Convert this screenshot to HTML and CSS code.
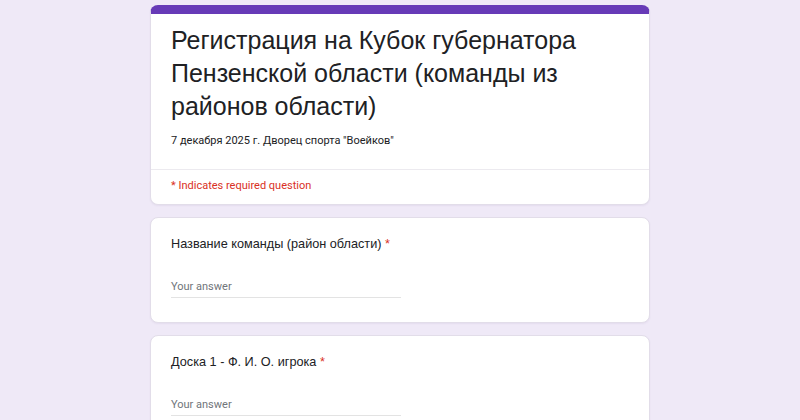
FILE: index.html
```html
<!DOCTYPE html>
<html lang="ru">
<head>
<meta charset="utf-8">
<link rel="stylesheet" href="styles.css">
</head>
<body>
<div class="form">
  <div class="card header">
    <div class="head-main">
      <h1 class="title">Регистрация на Кубок губернатора Пензенской области (команды из районов области)</h1>
      <p class="desc">7 декабря 2025 г. Дворец спорта "Воейков"</p>
    </div>
    <div class="head-note">* Indicates required question</div>
  </div>
  <div class="card question">
    <div class="q-label">Название команды (район области) <span class="req">*</span></div>
    <div class="answer">Your answer</div>
  </div>
  <div class="card question">
    <div class="q-label">Доска 1 - Ф. И. О. игрока <span class="req">*</span></div>
    <div class="answer">Your answer</div>
  </div>
</div>
</body>
</html>
```

FILE: styles.css
```css
html, body {
  margin: 0;
  padding: 0;
}
body {
  background: #efe9f7;
  font-family: "Liberation Sans", Arial, sans-serif;
  color: #202124;
  height: 420px;
  overflow: hidden;
}
.form {
  width: 500px;
  margin: 5px auto 0;
  display: flex;
  flex-direction: column;
  gap: 12px;
}
.card {
  background: #ffffff;
  border: 1px solid #e2dde9;
  border-radius: 8px;
  box-shadow: 0 1px 2px rgba(60, 40, 100, 0.06);
}
.header {
  border-top: 9px solid #673ab7;
  border-top-left-radius: 8px;
  border-top-right-radius: 8px;
}
.head-main {
  padding: 10px 20px 20px;
  border-bottom: 1px solid #eceaef;
}
.title {
  margin: 0;
  font-family: "Liberation Sans", Arial, sans-serif;
  font-weight: normal;
  font-size: 25px;
  line-height: 33px;
  color: #202124;
}
.desc {
  margin: 10px 0 0;
  font-family: Roboto, "Liberation Sans", sans-serif;
  font-size: 11px;
  line-height: 16px;
  color: #202124;
}
.head-note {
  padding: 8px 20px 10px;
  font-family: Roboto, "Liberation Sans", sans-serif;
  font-size: 11px;
  line-height: 16px;
  color: #d93025;
}
.question {
  padding: 16px 20px 24px;
}
.q-label {
  font-family: "Liberation Sans", Arial, sans-serif;
  font-size: 12.7px;
  line-height: 20px;
  color: #202124;
}
.req {
  color: #d93025;
}
.answer {
  margin-top: 25px;
  width: 230px;
  padding-bottom: 2px;
  border-bottom: 1px solid #e3e3e3;
  font-family: Roboto, "Liberation Sans", sans-serif;
  font-size: 11px;
  line-height: 16px;
  color: #70757a;
}
```
